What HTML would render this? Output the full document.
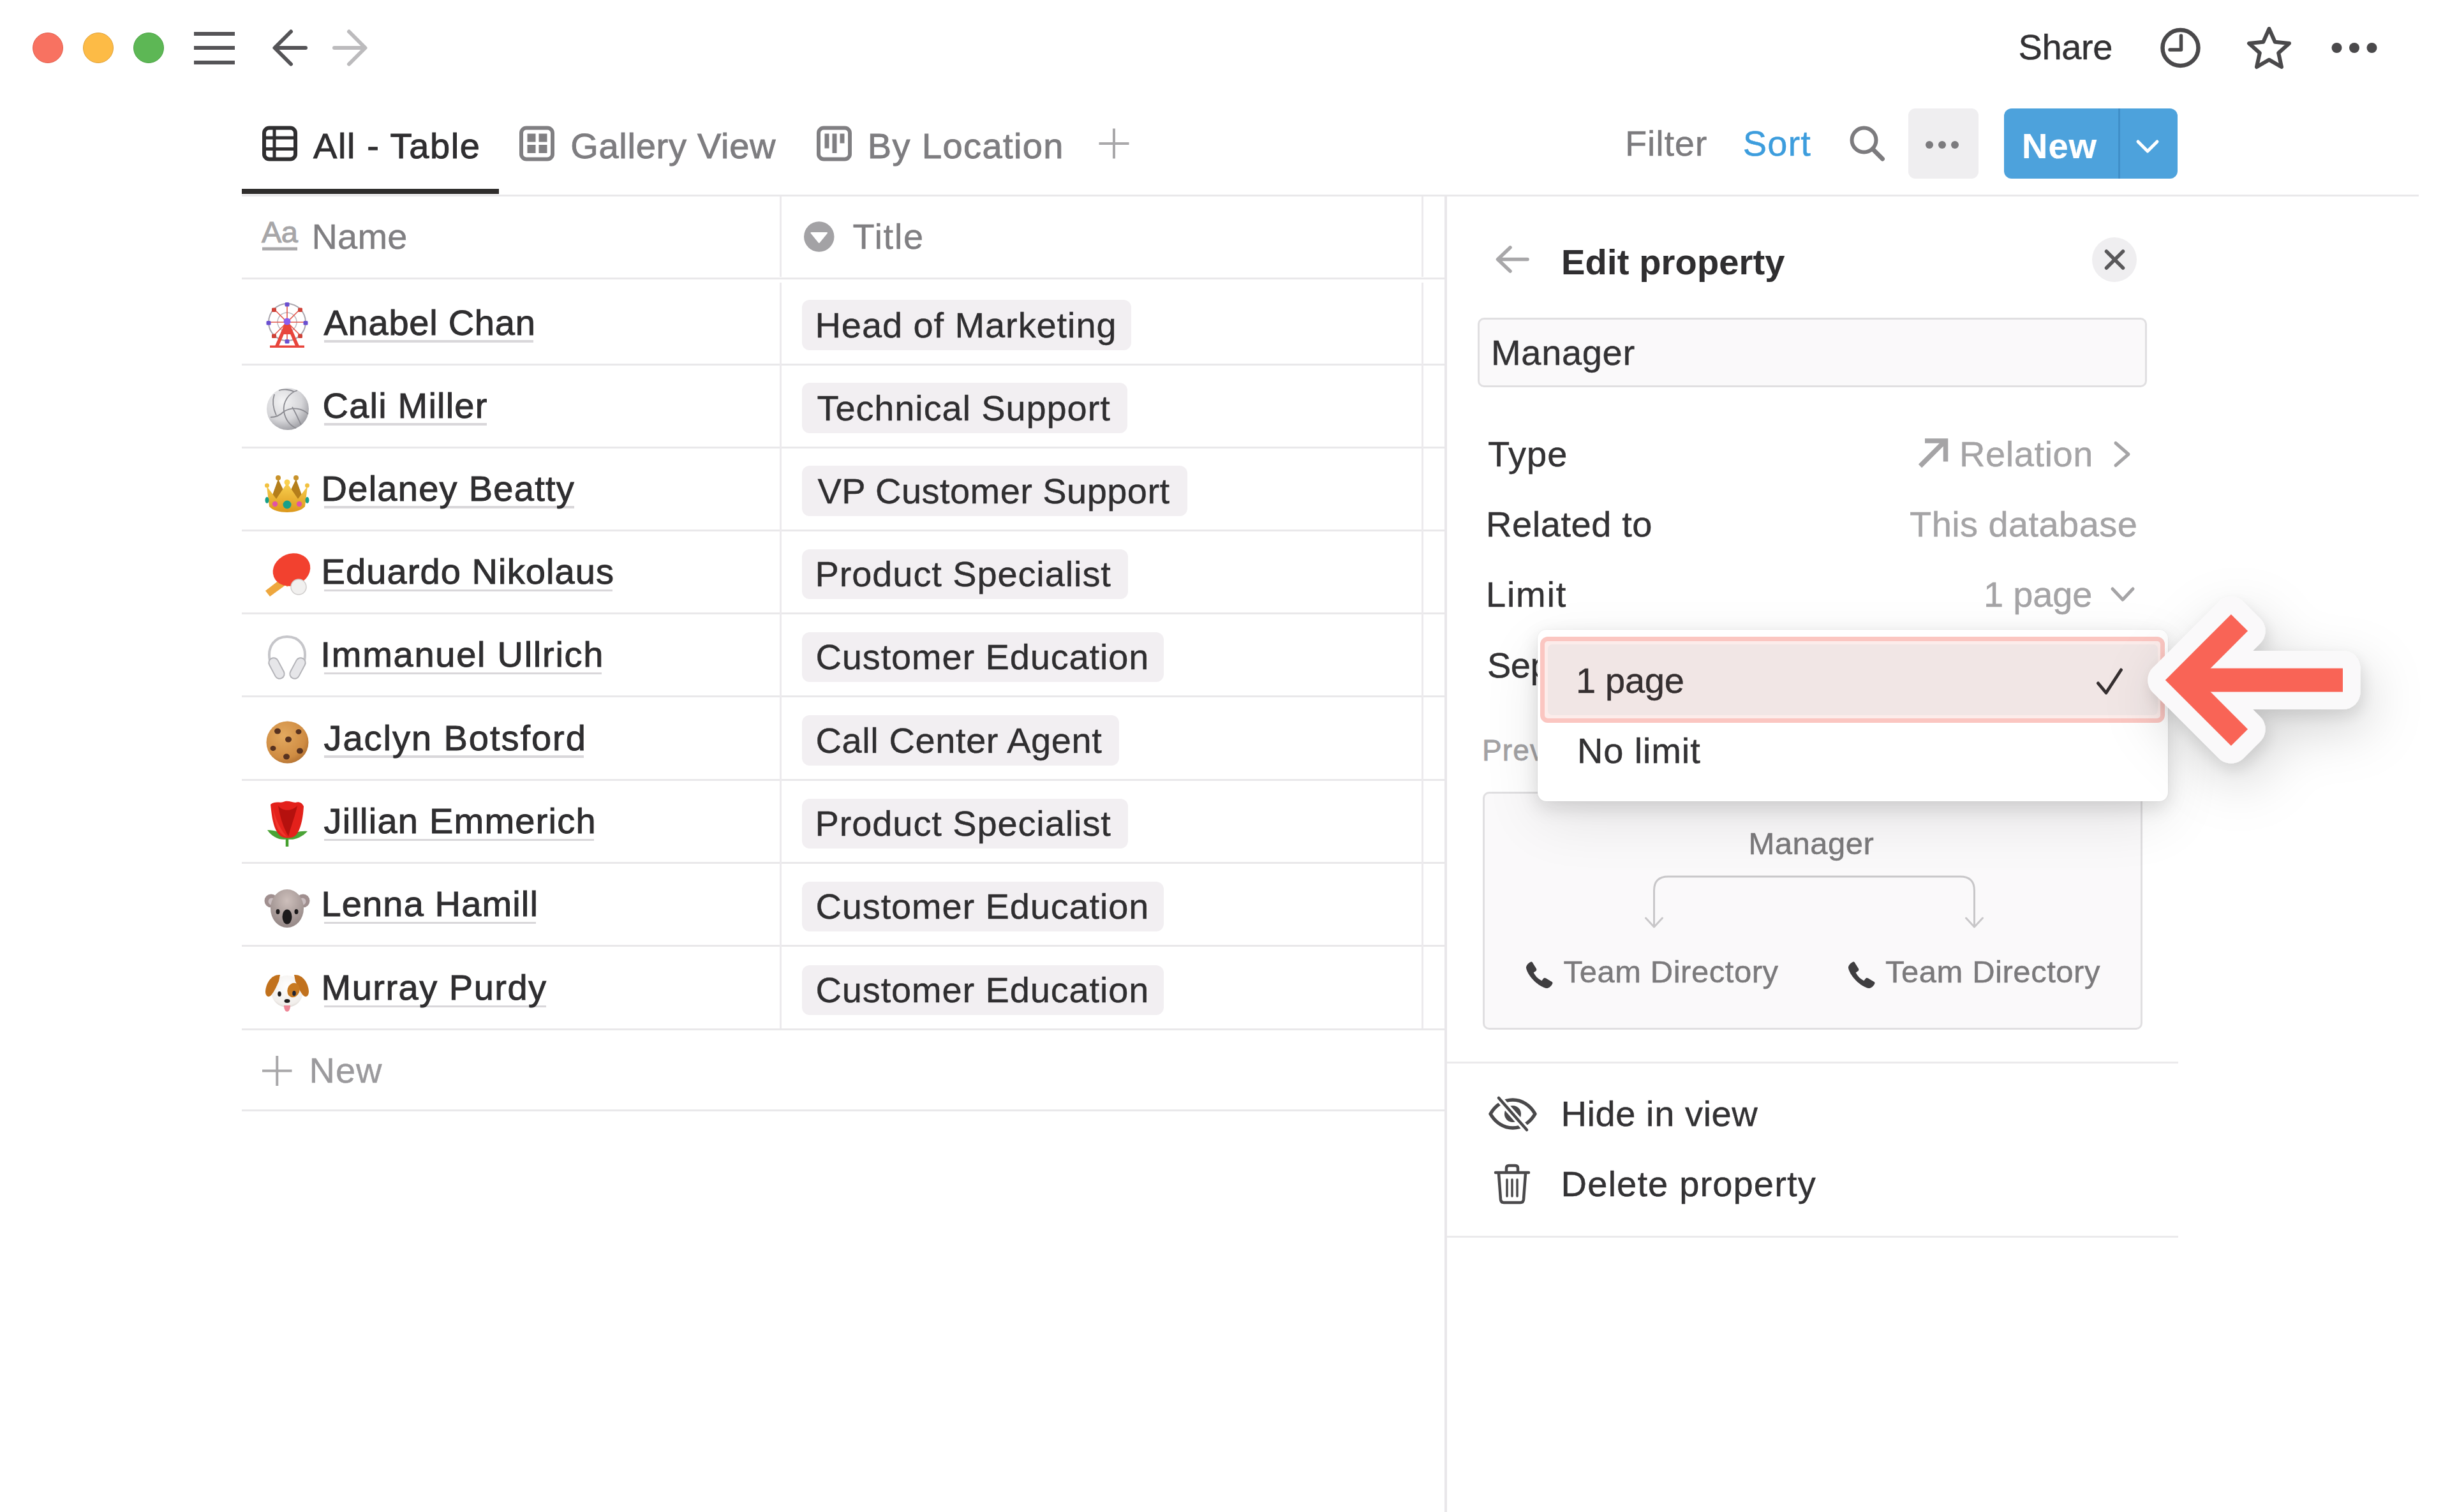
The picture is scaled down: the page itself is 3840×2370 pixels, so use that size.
<!DOCTYPE html>
<html lang="en"><head><meta charset="utf-8"><title>Team Directory</title>
<style>
html,body{margin:0;padding:0;background:#fff;overflow:hidden;}
body{width:3840px;height:2370px;position:relative;overflow:hidden;font-family:"Liberation Sans",sans-serif;}
.t{position:absolute;white-space:pre;line-height:1;}
.b{position:absolute;}
svg{position:absolute;overflow:visible;}
.nm{text-decoration:none;}
</style></head><body>
<!-- window chrome -->
<div class="b" style="left:51px;top:51px;width:46px;height:46px;border-radius:50%;background:#f87261;border:1px solid #e2604f;"></div>
<div class="b" style="left:130px;top:51px;width:46px;height:46px;border-radius:50%;background:#fdbb46;border:1px solid #e0a23a;"></div>
<div class="b" style="left:209px;top:51px;width:46px;height:46px;border-radius:50%;background:#5db755;border:1px solid #4ba444;"></div>
<div class="b" style="left:304px;top:49.5px;width:63.5px;height:6px;background:#555457;"></div>
<div class="b" style="left:304px;top:72px;width:63.5px;height:6px;background:#555457;"></div>
<div class="b" style="left:304px;top:94.5px;width:63.5px;height:6px;background:#555457;"></div>
<svg style="left:0;top:0" width="700" height="150" viewBox="0 0 700 150" fill="none" stroke-linecap="round" stroke-linejoin="round" stroke-width="6">
<path d="M479 75H431M456 49.5L430.5 75L456 100.5" stroke="#555457"/>
<path d="M524 75H572M547 49.5L572.5 75L547 100.5" stroke="#bcbbbd"/>
</svg>
<svg style="left:3380px;top:30px" width="360" height="90" viewBox="3380 30 360 90" fill="none" stroke="#4a494b" stroke-width="6.5" stroke-linejoin="round" stroke-linecap="round">
<circle cx="3417.5" cy="75" r="28"/>
<path d="M3418.5 56V78H3401" stroke-width="5.5"/>
<path d="M3556.5 45 L3565.7 65.8 L3588 68 L3571.2 83 L3576 105 L3556.5 93.7 L3537 105 L3541.8 83 L3525 68 L3547.3 65.8Z" stroke-width="6"/>
<g fill="#4a494b" stroke="none"><circle cx="3662.5" cy="75" r="8"/><circle cx="3690" cy="75" r="8"/><circle cx="3717.5" cy="75" r="8"/></g>
</svg>
<!-- view tabs -->
<svg style="left:400px;top:190px" width="1400" height="70" viewBox="400 190 1400 70" fill="none" stroke-width="6">
<g stroke="#2f2e30"><rect x="414" y="200.5" width="49" height="49" rx="8"/><path d="M430 201V249M414 216H463M414 233.5H463" stroke-width="5"/></g>
<g stroke="#807f82"><rect x="817" y="200.5" width="49" height="49" rx="8"/></g>
<g fill="#807f82"><rect x="826.5" y="209.5" width="13" height="13"/><rect x="844.5" y="209.5" width="13" height="13"/><rect x="826.5" y="227" width="13" height="13"/><rect x="844.5" y="227" width="13" height="13"/></g>
<g stroke="#807f82"><rect x="1283" y="200.5" width="49" height="49" rx="8"/></g>
<g fill="#807f82"><rect x="1292.5" y="209.5" width="7" height="23"/><rect x="1304.5" y="209.5" width="7" height="30.5"/><rect x="1316.5" y="209.5" width="7" height="15"/></g>
<path d="M1722.5 225H1769.5M1746 201.5V248.5" stroke="#a9a8aa" stroke-width="4"/>
</svg>
<div class="b" style="left:379px;top:296px;width:403px;height:8px;background:#2f2d2c;"></div>
<div class="b" style="left:379px;top:304.5px;width:3412px;height:3px;background:#e9e8ea;"></div>
<svg style="left:2890px;top:190px" width="70" height="70" viewBox="2890 190 70 70" fill="none" stroke="#7c7b7e" stroke-width="6" stroke-linecap="round">
<circle cx="2921.5" cy="219.5" r="19"/><path d="M2935.5 234L2950.5 249" stroke-width="7"/></svg>
<div class="b" style="left:2991px;top:170px;width:110px;height:110px;background:#efeef0;border-radius:11px;"></div>
<div class="b" style="left:3017.75px;top:221px;width:12px;height:12px;border-radius:50%;background:#7c7b7e"></div>
<div class="b" style="left:3037.75px;top:221px;width:12px;height:12px;border-radius:50%;background:#7c7b7e"></div>
<div class="b" style="left:3057.75px;top:221px;width:12px;height:12px;border-radius:50%;background:#7c7b7e"></div>
<div class="b" style="left:3141px;top:170px;width:272px;height:110px;background:#4da2dc;border-radius:12px;"></div>
<div class="b" style="left:3319.5px;top:170px;width:3px;height:110px;background:#408fc8;"></div>
<svg style="left:3340px;top:210px" width="50" height="40" viewBox="3340 210 50 40" fill="none" stroke="#fff" stroke-width="5" stroke-linecap="round" stroke-linejoin="round"><path d="M3351 222L3366 237L3381 222"/></svg>
<!-- table -->
<div class="b" style="left:379px;top:434.5px;width:1886px;height:3px;background:#e9e8ea;"></div>
<div class="b" style="left:379px;top:569.5px;width:1886px;height:3px;background:#e9e8ea;"></div>
<div class="b" style="left:379px;top:699.5px;width:1886px;height:3px;background:#e9e8ea;"></div>
<div class="b" style="left:379px;top:829.5px;width:1886px;height:3px;background:#e9e8ea;"></div>
<div class="b" style="left:379px;top:960px;width:1886px;height:3px;background:#e9e8ea;"></div>
<div class="b" style="left:379px;top:1090px;width:1886px;height:3px;background:#e9e8ea;"></div>
<div class="b" style="left:379px;top:1220.5px;width:1886px;height:3px;background:#e9e8ea;"></div>
<div class="b" style="left:379px;top:1351px;width:1886px;height:3px;background:#e9e8ea;"></div>
<div class="b" style="left:379px;top:1481px;width:1886px;height:3px;background:#e9e8ea;"></div>
<div class="b" style="left:379px;top:1612px;width:1886px;height:3px;background:#e9e8ea;"></div>
<div class="b" style="left:379px;top:1738.5px;width:1886px;height:3px;background:#e9e8ea;"></div>
<div class="b" style="left:1221.5px;top:308px;width:3px;height:126px;background:#eceaed;"></div>
<div class="b" style="left:1221.5px;top:443px;width:3px;height:1169px;background:#eceaed;"></div>
<div class="b" style="left:2228px;top:308px;width:3px;height:126px;background:#eceaed;"></div>
<div class="b" style="left:2228px;top:443px;width:3px;height:1169px;background:#eceaed;"></div>
<svg style="left:405px;top:340px" width="70" height="60" viewBox="405 340 70 60"><rect x="411" y="387.5" width="55" height="5" fill="#a9a8aa"/></svg>
<span class="t" style="left:410px;top:340.4px;font-size:47px;font-weight:400;color:#a7a6a8;letter-spacing:-0.5px;-webkit-text-stroke:1.1px #a7a6a8;">Aa</span>
<svg style="left:1255px;top:342px" width="60" height="60" viewBox="1255 342 60 60"><circle cx="1283.75" cy="371" r="23.75" fill="#a3a2a5"/><path d="M1271.5 365H1296L1283.75 380Z" fill="#fff" stroke="#fff" stroke-width="2" stroke-linejoin="round"/></svg>
<svg style="left:414px;top:473.5px" width="72" height="72" viewBox="0 0 72 72"><circle cx="36" cy="31" r="29" fill="none" stroke="#a9a5ad" stroke-width="2"/><circle cx="36" cy="31" r="15" fill="none" stroke="#bdb9c0" stroke-width="1.5"/><path d="M36 2V60M7 31H65M15.5 10.5L56.5 51.5M56.5 10.5L15.5 51.5" stroke="#e2574c" stroke-width="1.6" fill="none"/><rect x="32.5" y="0" width="7" height="6.5" rx="1.5" fill="#6a4fd0"/><rect x="53" y="8.5" width="7" height="6.5" rx="1.5" fill="#cf4339"/><rect x="61.5" y="29" width="7" height="6.5" rx="1.5" fill="#6a4fd0"/><rect x="53" y="49.5" width="7" height="6.5" rx="1.5" fill="#cf4339"/><rect x="32.5" y="58" width="7" height="6.5" rx="1.5" fill="#6a4fd0"/><rect x="12" y="49.5" width="7" height="6.5" rx="1.5" fill="#cf4339"/><rect x="3.5" y="29" width="7" height="6.5" rx="1.5" fill="#6a4fd0"/><rect x="12" y="8.5" width="7" height="6.5" rx="1.5" fill="#cf4339"/><path d="M36 31L19.5 69.5M36 31L52.5 69.5" stroke="#e8453c" stroke-width="5.5" fill="none"/><path d="M36 34L29.5 50H42.5Z" fill="#e8453c"/><rect x="9" y="67.5" width="54" height="3.5" fill="#e8453c"/><circle cx="36" cy="30" r="5.5" fill="#8a5cf0"/></svg>
<svg style="left:414px;top:603.5px" width="72" height="72" viewBox="0 0 72 72"><defs><radialGradient id="vb" cx=".38" cy=".32" r=".75"><stop offset="0" stop-color="#f4f4f5"/><stop offset=".6" stop-color="#d6d6d9"/><stop offset="1" stop-color="#97979d"/></radialGradient></defs><circle cx="37" cy="37" r="33" fill="url(#vb)"/><path d="M31 41C29 27 38 12 52 8M31 41C44 33 60 36 69 45M31 41C33 53 40 63 50 67M10 50C18 50 26 46 31 41M16 14C12 26 14 36 19 47M44 34C50 44 54 54 58 62M23 8C30 6 40 6 47 10" fill="none" stroke="#8b8b91" stroke-width="1.8"/></svg>
<svg style="left:414px;top:733.5px" width="72" height="72" viewBox="0 0 72 72"><defs><linearGradient id="cr" x1="0" y1="0" x2="0" y2="1"><stop offset="0" stop-color="#f9d04f"/><stop offset="1" stop-color="#dc981c"/></linearGradient></defs><path d="M10 50L22 17L36 46L50 17L62 50Z" fill="#b47e1b"/><circle cx="22" cy="15" r="4" fill="#c8922a"/><circle cx="50" cy="15" r="4" fill="#c8922a"/><path d="M4 28L8 60C18 72 54 72 64 60L68 28L53 48L36 23L19 48Z" fill="url(#cr)"/><circle cx="36" cy="22" r="4.5" fill="#f9d04f"/><circle cx="4.5" cy="27" r="3.5" fill="#f2c13f"/><circle cx="67.5" cy="27" r="3.5" fill="#f2c13f"/><circle cx="36" cy="57" r="6.5" fill="#17a08a"/><circle cx="17" cy="56" r="4.2" fill="#e153a6"/><circle cx="55" cy="56" r="4.2" fill="#e153a6"/><ellipse cx="4.5" cy="50" rx="3" ry="5" fill="#17a08a"/><ellipse cx="67.5" cy="50" rx="3" ry="5" fill="#17a08a"/></svg>
<svg style="left:414px;top:864px" width="72" height="72" viewBox="0 0 72 72"><path d="M28 42L2 62L9 71L35 52Z" fill="#eea73e"/><path d="M22 38L36 56L42 50L28 34Z" fill="#f5b94e"/><ellipse cx="43" cy="29" rx="30" ry="25" transform="rotate(-22 43 29)" fill="#f2412f"/><circle cx="54" cy="56" r="12" fill="#f1f0ef" stroke="#cfcdcc" stroke-width="1.5"/></svg>
<svg style="left:414px;top:994px" width="72" height="72" viewBox="0 0 72 72"><path d="M9 42C4 18 18 4 36 4S68 18 63 42" fill="none" stroke="#c6c6ca" stroke-width="4"/><rect x="12" y="36" width="15" height="35" rx="7.5" fill="#e6e6e9" stroke="#b3b3b8" stroke-width="2" transform="rotate(-28 19.5 53.5)"/><rect x="45" y="36" width="15" height="35" rx="7.5" fill="#e6e6e9" stroke="#b3b3b8" stroke-width="2" transform="rotate(28 52.5 53.5)"/></svg>
<svg style="left:414px;top:1124.5px" width="72" height="72" viewBox="0 0 72 72"><defs><radialGradient id="ck" cx=".4" cy=".35" r=".75"><stop offset="0" stop-color="#e3a95f"/><stop offset=".7" stop-color="#cf8c43"/><stop offset="1" stop-color="#a9682b"/></radialGradient></defs><circle cx="36.5" cy="38.5" r="33" fill="url(#ck)"/><g fill="#573220"><ellipse cx="21" cy="21" rx="5" ry="4.5"/><ellipse cx="54" cy="22" rx="4.5" ry="4"/><ellipse cx="38" cy="34" rx="5" ry="4.5"/><ellipse cx="14" cy="48" rx="4.5" ry="4"/><ellipse cx="56" cy="52" rx="5" ry="4.5"/><ellipse cx="35" cy="61" rx="5" ry="4.5"/></g></svg>
<svg style="left:414px;top:1255px" width="72" height="72" viewBox="0 0 72 72"><path d="M36 52V72" stroke="#46a02f" stroke-width="4.5"/><path d="M36 60C27 63 13 58 5 46C17 46 27 50 32 56ZM36 60C45 63 59 58 68 48C56 47 46 50 40 56Z" fill="#4aa336"/><path d="M10 6C16 0 25 4 30 2C36-1 43 2 49 3C55 1 60 4 62 9C61 26 58 44 50 54C44 60 30 60 24 54C14 44 12 24 10 6Z" fill="#e3211b"/><path d="M22 8C28 16 42 18 52 8C48 26 42 40 38 56C30 42 25 26 22 8Z" fill="#b5110e"/><path d="M14 12C18 30 26 46 36 57C24 54 16 40 14 12Z" fill="#f0352c"/></svg>
<svg style="left:414px;top:1385px" width="72" height="72" viewBox="0 0 72 72"><defs><radialGradient id="ko" cx=".5" cy=".3" r=".8"><stop offset="0" stop-color="#cdbfbb"/><stop offset="1" stop-color="#8d807f"/></radialGradient></defs><circle cx="11" cy="27" r="10.5" fill="#a08f8f"/><circle cx="61" cy="27" r="10.5" fill="#a08f8f"/><circle cx="12" cy="28" r="5.5" fill="#c9bdbf"/><circle cx="60" cy="28" r="5.5" fill="#c9bdbf"/><ellipse cx="36" cy="39" rx="26" ry="30" fill="url(#ko)"/><ellipse cx="36" cy="52" rx="7.5" ry="11.5" fill="#1c1a1b"/><ellipse cx="21.5" cy="44" rx="3" ry="4" fill="#1c1a1b"/><ellipse cx="50.5" cy="44" rx="3" ry="4" fill="#1c1a1b"/></svg>
<svg style="left:414px;top:1516px" width="72" height="72" viewBox="0 0 72 72"><defs><radialGradient id="dg" cx=".5" cy=".35" r=".75"><stop offset="0" stop-color="#ffffff"/><stop offset=".75" stop-color="#f1eeeb"/><stop offset="1" stop-color="#c9c2bb"/></radialGradient></defs><ellipse cx="36" cy="38" rx="25" ry="25" fill="url(#dg)"/><path d="M25 12C12 11 3 24 2 38C2 45 6 48 10 45C15 40 19 31 23 22Z" fill="#c1711d"/><path d="M47 12C60 11 69 24 70 38C70 45 66 48 62 45C57 40 53 31 49 22Z" fill="#c1711d"/><ellipse cx="46" cy="36" rx="9.5" ry="11.5" transform="rotate(20 46 36)" fill="#c87a22"/><ellipse cx="24" cy="42" rx="2.8" ry="4" fill="#1f1d1d"/><ellipse cx="47" cy="41" rx="2.8" ry="4" fill="#1f2433"/><ellipse cx="36" cy="53" rx="4.5" ry="3" fill="#1f1d1d"/><path d="M31 60C31 73 41 73 41 60Z" fill="#ee8797"/></svg>
<div class="b" style="left:1256.5px;top:470px;width:516.5px;height:78.5px;background:#f2eff2;border-radius:12px;"></div>
<div class="b" style="left:1256.5px;top:600px;width:510px;height:78.5px;background:#f2eff2;border-radius:12px;"></div>
<div class="b" style="left:1256.5px;top:730px;width:604px;height:78.5px;background:#f2eff2;border-radius:12px;"></div>
<div class="b" style="left:1256.5px;top:860.5px;width:511.7px;height:78.5px;background:#f2eff2;border-radius:12px;"></div>
<div class="b" style="left:1256.5px;top:990.5px;width:567.8px;height:78.5px;background:#f2eff2;border-radius:12px;"></div>
<div class="b" style="left:1256.5px;top:1121px;width:497.5px;height:78.5px;background:#f2eff2;border-radius:12px;"></div>
<div class="b" style="left:1256.5px;top:1251.5px;width:511.7px;height:78.5px;background:#f2eff2;border-radius:12px;"></div>
<div class="b" style="left:1256.5px;top:1381.5px;width:567.8px;height:78.5px;background:#f2eff2;border-radius:12px;"></div>
<div class="b" style="left:1256.5px;top:1512.5px;width:567.8px;height:78.5px;background:#f2eff2;border-radius:12px;"></div>
<div class="b" style="left:507.5px;top:533px;width:328.5px;height:3.5px;background:#d9d7da;"></div>
<div class="b" style="left:507.5px;top:663px;width:255px;height:3.5px;background:#d9d7da;"></div>
<div class="b" style="left:507.5px;top:793px;width:392.5px;height:3.5px;background:#d9d7da;"></div>
<div class="b" style="left:507.5px;top:923.5px;width:452.5px;height:3.5px;background:#d9d7da;"></div>
<div class="b" style="left:507.5px;top:1053.5px;width:435px;height:3.5px;background:#d9d7da;"></div>
<div class="b" style="left:507.5px;top:1184px;width:407.5px;height:3.5px;background:#d9d7da;"></div>
<div class="b" style="left:507.5px;top:1314.5px;width:423.5px;height:3.5px;background:#d9d7da;"></div>
<div class="b" style="left:507.5px;top:1444.5px;width:332.5px;height:3.5px;background:#d9d7da;"></div>
<div class="b" style="left:507.5px;top:1575.5px;width:348.5px;height:3.5px;background:#d9d7da;"></div>
<svg style="left:405px;top:1650px" width="60" height="60" viewBox="405 1650 60 60"><path d="M411 1678.5H457.5M434.25 1655V1702" stroke="#a9a8aa" stroke-width="4" fill="none"/></svg>
<!-- side panel -->
<div class="b" style="left:2264px;top:308px;width:3.5px;height:2062px;background:#e9e7ea;"></div>
<svg style="left:2340px;top:380px" width="60" height="54" viewBox="2340 380 60 54" fill="none" stroke="#a8a7a9" stroke-width="5.5" stroke-linecap="round" stroke-linejoin="round"><path d="M2394 406.5H2348M2367 388L2347.5 406.5L2367 425"/></svg>
<div class="b" style="left:3279px;top:372px;width:70px;height:70px;border-radius:50%;background:#efeef0"></div>
<svg style="left:3290px;top:385px" width="50" height="44" viewBox="3290 385 50 44" fill="none" stroke="#59585a" stroke-width="5.5" stroke-linecap="round"><path d="M3301.5 394L3327.5 420M3327.5 394L3301.5 420"/></svg>
<div class="b" style="left:2315.5px;top:498px;width:1043.5px;height:103px;background:#faf9fa;border:3px solid #e0dfe1;border-radius:10px;"></div>
<svg style="left:3000px;top:680px" width="350" height="280" viewBox="3000 680 350 280" fill="none" stroke="#a5a4a6" stroke-width="6" stroke-linecap="round" stroke-linejoin="round">
<path d="M3009.5 730.5L3048 692M3017 691H3049.5V723.5" stroke-width="7.5" stroke-linecap="butt" stroke-linejoin="miter"/>
<path d="M3316 694.5L3336 712L3316 729.5" stroke-width="5"/>
<path d="M3311 923L3327 940L3343 923" stroke-width="5"/>
</svg>
<div class="b" style="left:2324px;top:1241px;width:1028px;height:367px;background:#faf9fa;border:3px solid #e0dfe1;border-radius:10px;"></div>
<svg style="left:2560px;top:1360px" width="560" height="110" viewBox="2560 1360 560 110" fill="none" stroke="#c8c7c9" stroke-width="3" stroke-linecap="round" stroke-linejoin="round">
<path d="M2592.5 1452V1396Q2592.5 1374 2614.5 1374H3072.5Q3094.5 1374 3094.5 1396V1452"/>
<path d="M2579.5 1439L2592.5 1453L2605.5 1439M3081.5 1439L3094.5 1453L3107.5 1439"/></svg>
<svg style="left:2389px;top:1505px" width="47" height="47" viewBox="0 0 48 48"><path d="M10 3C6 5 3 9 3 12C5 25 23 43 36 45C39 45 43 42 45 38C46 36 45 35 43 34L35 29C33 28 32 28 31 29L28 33C22 30 18 26 15 20L19 17C20 16 20 15 19 13L14 5C13 3 12 2 10 3Z" fill="#3f3e40"/></svg>
<svg style="left:2894px;top:1505px" width="47" height="47" viewBox="0 0 48 48"><path d="M10 3C6 5 3 9 3 12C5 25 23 43 36 45C39 45 43 42 45 38C46 36 45 35 43 34L35 29C33 28 32 28 31 29L28 33C22 30 18 26 15 20L19 17C20 16 20 15 19 13L14 5C13 3 12 2 10 3Z" fill="#3f3e40"/></svg>
<div class="b" style="left:2267.5px;top:1663.5px;width:1146px;height:3px;background:#ebeaec;"></div>
<div class="b" style="left:2267.5px;top:1937px;width:1146px;height:3px;background:#ebeaec;"></div>
<svg style="left:2333px;top:1716px" width="76" height="60" viewBox="0 0 76 60" fill="none" stroke="#4a494b" stroke-width="5.5" stroke-linecap="round" stroke-linejoin="round">
<path d="M3 30C11 16 24 8 38 8S65 16 73 30C65 44 52 52 38 52S11 44 3 30Z"/><circle cx="38" cy="30" r="13" fill="#4a494b" stroke="none"/>
<path d="M16 5L60 55" stroke="#fff" stroke-width="11"/><path d="M16 5L60 55" stroke-width="4.5"/></svg>
<svg style="left:2340px;top:1822px" width="60" height="68" viewBox="0 0 60 68" fill="none" stroke="#4a494b" stroke-width="4.5" stroke-linecap="round" stroke-linejoin="round">
<path d="M4 16H56M21 16V9Q21 5 25 5H35Q39 5 39 9V16M9 17L12 58Q12.5 63 17 63H43Q47.5 63 48 58L51 17"/>
<path d="M22 27V53M30 27V53M38 27V53" stroke-width="3.5"/></svg>
<!-- text -->
<span class="t " style="left:3163.5px;top:46.3px;font-size:56px;font-weight:400;color:#333234;letter-spacing:-0.38px;-webkit-text-stroke:0.45px #333234;">Share</span>
<span class="t " style="left:491px;top:201.3px;font-size:56px;font-weight:400;color:#2f2e30;letter-spacing:1.6px;-webkit-text-stroke:0.95px #2f2e30;">All - Table</span>
<span class="t " style="left:894.2px;top:201.3px;font-size:56px;font-weight:400;color:#7e7d80;letter-spacing:0.73px;-webkit-text-stroke:0.95px #7e7d80;">Gallery View</span>
<span class="t " style="left:1359.8px;top:201.3px;font-size:56px;font-weight:400;color:#7e7d80;letter-spacing:1.4px;-webkit-text-stroke:0.95px #7e7d80;">By Location</span>
<span class="t " style="left:2547px;top:197.1px;font-size:56px;font-weight:400;color:#7c7b7e;letter-spacing:0.8px;-webkit-text-stroke:0.45px #7c7b7e;">Filter</span>
<span class="t " style="left:2731.8px;top:197.1px;font-size:56px;font-weight:400;color:#3d9ddd;letter-spacing:1.08px;-webkit-text-stroke:0.45px #3d9ddd;">Sort</span>
<span class="t " style="left:3169px;top:200.6px;font-size:56px;font-weight:700;color:#ffffff;letter-spacing:1px;-webkit-text-stroke:0.2px #ffffff;">New</span>
<span class="t " style="left:488.5px;top:342.6px;font-size:56px;font-weight:400;color:#807f82;letter-spacing:0.17px;-webkit-text-stroke:0.45px #807f82;">Name</span>
<span class="t " style="left:1336.5px;top:343.1px;font-size:56px;font-weight:400;color:#807f82;letter-spacing:1.75px;-webkit-text-stroke:0.45px #807f82;">Title</span>
<span class="t nm" style="left:507.5px;top:477.6px;font-size:56px;font-weight:400;color:#2f2e30;letter-spacing:0.75px;-webkit-text-stroke:0.95px #2f2e30;">Anabel Chan</span>
<span class="t nm" style="left:505.5px;top:607.6px;font-size:56px;font-weight:400;color:#2f2e30;letter-spacing:1.2px;-webkit-text-stroke:0.95px #2f2e30;">Cali Miller</span>
<span class="t nm" style="left:503.5px;top:737.6px;font-size:56px;font-weight:400;color:#2f2e30;letter-spacing:1.27px;-webkit-text-stroke:0.95px #2f2e30;">Delaney Beatty</span>
<span class="t nm" style="left:503.5px;top:868.1px;font-size:56px;font-weight:400;color:#2f2e30;letter-spacing:1.1px;-webkit-text-stroke:0.95px #2f2e30;">Eduardo Nikolaus</span>
<span class="t nm" style="left:502.5px;top:998.1px;font-size:56px;font-weight:400;color:#2f2e30;letter-spacing:1.73px;-webkit-text-stroke:0.95px #2f2e30;">Immanuel Ullrich</span>
<span class="t nm" style="left:507.5px;top:1128.6px;font-size:56px;font-weight:400;color:#2f2e30;letter-spacing:1.96px;-webkit-text-stroke:0.95px #2f2e30;">Jaclyn Botsford</span>
<span class="t nm" style="left:507.5px;top:1259.1px;font-size:56px;font-weight:400;color:#2f2e30;letter-spacing:1.23px;-webkit-text-stroke:0.95px #2f2e30;">Jillian Emmerich</span>
<span class="t nm" style="left:503.5px;top:1389.1px;font-size:56px;font-weight:400;color:#2f2e30;letter-spacing:1.14px;-webkit-text-stroke:0.95px #2f2e30;">Lenna Hamill</span>
<span class="t nm" style="left:503.5px;top:1520.1px;font-size:56px;font-weight:400;color:#2f2e30;letter-spacing:1.5px;-webkit-text-stroke:0.95px #2f2e30;">Murray Purdy</span>
<span class="t " style="left:1277.5px;top:481.6px;font-size:56px;font-weight:400;color:#2f2e30;letter-spacing:0.91px;-webkit-text-stroke:0.4px #2f2e30;">Head of Marketing</span>
<span class="t " style="left:1280.5px;top:611.6px;font-size:56px;font-weight:400;color:#2f2e30;letter-spacing:0.88px;-webkit-text-stroke:0.4px #2f2e30;">Technical Support</span>
<span class="t " style="left:1281.5px;top:741.6px;font-size:56px;font-weight:400;color:#2f2e30;letter-spacing:0.44px;-webkit-text-stroke:0.4px #2f2e30;">VP Customer Support</span>
<span class="t " style="left:1277.5px;top:872.1px;font-size:56px;font-weight:400;color:#2f2e30;letter-spacing:0.89px;-webkit-text-stroke:0.4px #2f2e30;">Product Specialist</span>
<span class="t " style="left:1278.5px;top:1002.1px;font-size:56px;font-weight:400;color:#2f2e30;letter-spacing:0.85px;-webkit-text-stroke:0.4px #2f2e30;">Customer Education</span>
<span class="t " style="left:1278.5px;top:1132.6px;font-size:56px;font-weight:400;color:#2f2e30;letter-spacing:0.59px;-webkit-text-stroke:0.4px #2f2e30;">Call Center Agent</span>
<span class="t " style="left:1277.5px;top:1263.1px;font-size:56px;font-weight:400;color:#2f2e30;letter-spacing:0.89px;-webkit-text-stroke:0.4px #2f2e30;">Product Specialist</span>
<span class="t " style="left:1278.5px;top:1393.1px;font-size:56px;font-weight:400;color:#2f2e30;letter-spacing:0.85px;-webkit-text-stroke:0.4px #2f2e30;">Customer Education</span>
<span class="t " style="left:1278.5px;top:1524.1px;font-size:56px;font-weight:400;color:#2f2e30;letter-spacing:0.85px;-webkit-text-stroke:0.4px #2f2e30;">Customer Education</span>
<span class="t " style="left:484.5px;top:1650.1px;font-size:56px;font-weight:400;color:#9b9a9d;letter-spacing:1px;-webkit-text-stroke:0.45px #9b9a9d;">New</span>
<span class="t " style="left:2447px;top:382.6px;font-size:56px;font-weight:700;color:#2f2e30;letter-spacing:0.17px;-webkit-text-stroke:0.1px #2f2e30;">Edit property</span>
<span class="t " style="left:2337px;top:525.1px;font-size:56px;font-weight:400;color:#333234;letter-spacing:0.67px;-webkit-text-stroke:0.45px #333234;">Manager</span>
<span class="t " style="left:2332px;top:683.6px;font-size:56px;font-weight:400;color:#333234;letter-spacing:1px;-webkit-text-stroke:0.45px #333234;">Type</span>
<span class="t " style="left:3071px;top:683.6px;font-size:56px;font-weight:400;color:#a5a4a6;letter-spacing:0.57px;-webkit-text-stroke:0.45px #a5a4a6;">Relation</span>
<span class="t " style="left:2329px;top:793.6px;font-size:56px;font-weight:400;color:#333234;letter-spacing:0.57px;-webkit-text-stroke:0.45px #333234;">Related to</span>
<span class="t " style="left:2993px;top:793.6px;font-size:56px;font-weight:400;color:#a5a4a6;letter-spacing:0.42px;-webkit-text-stroke:0.45px #a5a4a6;">This database</span>
<span class="t " style="left:2329px;top:903.6px;font-size:56px;font-weight:400;color:#333234;letter-spacing:1.75px;-webkit-text-stroke:0.45px #333234;">Limit</span>
<span class="t " style="left:3109px;top:903.6px;font-size:56px;font-weight:400;color:#a5a4a6;letter-spacing:-0.2px;-webkit-text-stroke:0.45px #a5a4a6;">1 page</span>
<span class="t " style="left:2331px;top:1014.6px;font-size:56px;font-weight:400;color:#333234;letter-spacing:-0.5px;-webkit-text-stroke:0.45px #333234;">Separate directions</span>
<span class="t " style="left:2323px;top:1153.1px;font-size:46px;font-weight:400;color:#a3a2a4;letter-spacing:1.17px;-webkit-text-stroke:0.8px #a3a2a4;">Preview</span>
<span class="t " style="left:2740.5px;top:1298.1px;font-size:49px;font-weight:400;color:#7b7a7c;letter-spacing:0.5px;-webkit-text-stroke:0.5px #7b7a7c;">Manager</span>
<span class="t " style="left:2450.6px;top:1498.9px;font-size:49px;font-weight:400;color:#7b7a7c;letter-spacing:0.54px;-webkit-text-stroke:0.5px #7b7a7c;">Team Directory</span>
<span class="t " style="left:2955px;top:1498.9px;font-size:49px;font-weight:400;color:#7b7a7c;letter-spacing:0.54px;-webkit-text-stroke:0.5px #7b7a7c;">Team Directory</span>
<span class="t " style="left:2446.6px;top:1718.1px;font-size:56px;font-weight:400;color:#333234;letter-spacing:0.56px;-webkit-text-stroke:0.45px #333234;">Hide in view</span>
<span class="t " style="left:2446.6px;top:1828.3px;font-size:56px;font-weight:400;color:#333234;letter-spacing:1.16px;-webkit-text-stroke:0.45px #333234;">Delete property</span>
<!-- limit dropdown -->
<div class="b" style="left:2410px;top:987px;width:988px;height:269px;background:#ffffff;border-radius:14px;box-shadow:0 0 0 1px rgba(15,15,15,.03),0 10px 30px rgba(15,15,15,.13),0 30px 90px rgba(15,15,15,.09);"></div>
<div class="b" style="left:2414px;top:997.5px;width:965px;height:121.5px;background:#fcecea;border:7px solid #fbc6c1;border-radius:12px;"></div>
<div class="b" style="left:2425.5px;top:1009.5px;width:956px;height:111.5px;background:#f1e6e5;border-radius:7px;"></div>
<svg style="left:3280px;top:1040px" width="56" height="56" viewBox="3280 1040 56 56" fill="none" stroke="#352f30" stroke-width="5" stroke-linecap="round" stroke-linejoin="round"><path d="M3288.5 1071L3301 1086L3324.5 1050"/></svg>
<span class="t " style="left:2470px;top:1038.6px;font-size:56px;font-weight:400;color:#352f30;letter-spacing:-0.3px;-webkit-text-stroke:0.45px #352f30;">1 page</span>
<span class="t " style="left:2472px;top:1148.6px;font-size:56px;font-weight:400;color:#333234;letter-spacing:0.86px;-webkit-text-stroke:0.45px #333234;">No limit</span>
<!-- annotation arrow -->
<svg style="left:3300px;top:880px" width="480" height="400" viewBox="3300 880 480 400">
<defs><filter id="ash" x="-60%" y="-60%" width="220%" height="260%"><feGaussianBlur in="SourceAlpha" stdDeviation="42" result="b1"/><feOffset in="b1" dx="12" dy="30" result="o1"/><feFlood flood-color="#000" flood-opacity=".17"/><feComposite in2="o1" operator="in" result="s1"/><feGaussianBlur in="SourceAlpha" stdDeviation="12" result="b2"/><feOffset in="b2" dx="4" dy="10" result="o2"/><feFlood flood-color="#000" flood-opacity=".10"/><feComposite in2="o2" operator="in" result="s2"/><feMerge><feMergeNode in="s1"/><feMergeNode in="s2"/><feMergeNode in="SourceGraphic"/></feMerge></filter></defs>
<g filter="url(#ash)"><g fill="#faf9fa" stroke="#faf9fa" stroke-width="55" stroke-linejoin="round">
<polygon points="3393.8,1066 3496.9,962.9 3523.1,989.1 3446.2,1066"/><polygon points="3393.8,1066 3496.9,1169.1 3523.1,1142.9 3446.2,1066"/><polygon points="3420,1047.5 3672,1047.5 3672,1084.5 3420,1084.5"/></g></g>
<g fill="#f96456"><polygon points="3393.8,1066 3496.9,962.9 3523.1,989.1 3446.2,1066"/><polygon points="3393.8,1066 3496.9,1169.1 3523.1,1142.9 3446.2,1066"/><polygon points="3420,1047.5 3672,1047.5 3672,1084.5 3420,1084.5"/></g>
</svg>
</body></html>
